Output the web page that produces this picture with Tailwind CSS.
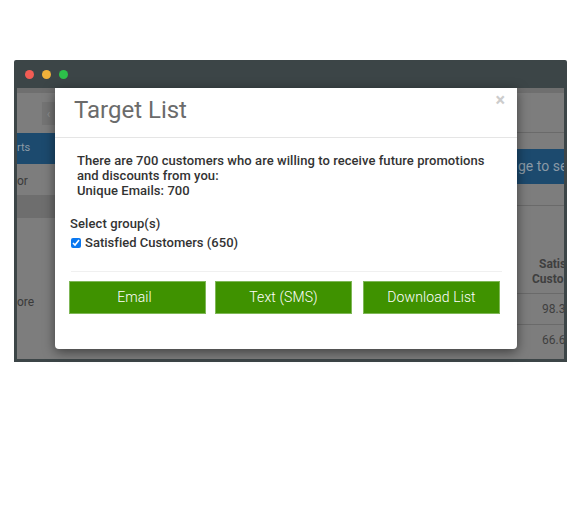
<!DOCTYPE html>
<html>
<head>
<meta charset="utf-8">
<title>Target List</title>
<script src="https://cdn.jsdelivr.net/npm/@tailwindcss/browser@4"></script>
</head>
<body class="bg-white font-['Roboto',sans-serif] w-[580px] h-[530px] overflow-hidden">
<div class="pt-[60px] pl-[14px]">
  <!-- window frame -->
  <div class="relative w-[553px] h-[302px] bg-[#3c4547] flex flex-col rounded-t-[2px]">
    <div class="h-[28px] flex items-center gap-[8px] pl-[11px] shrink-0">
      <span class="w-[9px] h-[9px] rounded-full bg-[#f25c54]"></span>
      <span class="w-[9px] h-[9px] rounded-full bg-[#f0b13a]"></span>
      <span class="w-[9px] h-[9px] rounded-full bg-[#2dc04a]"></span>
    </div>

    <!-- dimmed page behind the dialog -->
    <div class="ml-[3px] mr-[3px] mb-[3px] grow overflow-hidden bg-[#7d7d7d] text-[#3f3f3f] flex justify-between">
      <div class="w-[38px] flex flex-col text-[12px] text-[#3a3a3a]">
        <div class="h-[5px] bg-[#6f6f6f] shrink-0"></div>
        <div class="h-[40px] shrink-0 pt-[9px] flex justify-end">
          <span class="w-[13px] h-[23px] bg-[#747474] text-[#8f8f8f] text-[12px] flex items-center justify-center">‹</span>
        </div>
        <div class="h-[31px] shrink-0 bg-[#1c4a6e] text-[#8b9aa6] text-[11px] flex items-center">rts</div>
        <div class="h-[31px] shrink-0 flex items-center pt-[3px]">or</div>
        <div class="h-[23px] shrink-0 bg-[#6e6e6e]"></div>
        <div class="pt-[77px] leading-[15px]">ore</div>
      </div>
      <div class="w-[60px] flex flex-col">
        <div class="h-[5px] bg-[#6f6f6f] shrink-0"></div>
        <div class="h-[40px] shrink-0 border-b border-[#6a6a6a]"></div>
        <div class="h-[16px] shrink-0"></div>
        <div class="h-[35px] shrink-0 bg-[#1c4a6e] text-[#8b9aa6] text-[14px] flex items-center pl-[14px] whitespace-nowrap overflow-hidden">ge to see</div>
        <div class="h-[22px] shrink-0 border-b border-[#6a6a6a]"></div>
        <div class="h-[87px] shrink-0 pt-[51px] text-[12px] font-bold leading-[15px] whitespace-nowrap overflow-hidden">
          <div class="pl-[35px]">Satis</div>
          <div class="pl-[28px]">Custo</div>
        </div>
        <div class="h-[31px] shrink-0 border-t border-[#6a6a6a] text-[12px] flex items-center pl-[38px] overflow-hidden">98.3</div>
        <div class="h-[31px] shrink-0 border-t border-[#6a6a6a] text-[12px] flex items-center pl-[38px] overflow-hidden">66.6</div>
      </div>
    </div>

    <!-- dialog -->
    <div class="absolute left-[41px] top-[28px] w-[462px] h-[261px] bg-white rounded-b-[4px] shadow-[0_3px_12px_rgba(0,0,0,0.5)] flex flex-col">
      <div class="relative h-[50px] border-b border-[#e5e5e5] pl-[19px] pt-[7px] shrink-0">
        <h4 class="text-[24px] leading-[30px] text-[#6b6b6b]">Target List</h4>
        <span class="absolute right-[12px] top-[3px] text-[#cccccc] text-[18px] leading-[18px] font-bold">×</span>
      </div>
      <div class="px-[14px] grow">
        <p class="pl-[8px] pt-[15px] text-[13px] leading-[15px] font-medium tracking-[0.06px] text-[#333]">There are 700 customers who are willing to receive future promotions<br>and discounts from you:<br>Unique Emails: 700</p>
        <p class="pl-px mt-[18px] text-[13px] leading-[15px] font-medium tracking-[0.1px] text-[#333]">Select group(s)</p>
        <label class="mt-[4px] flex items-center text-[13px] leading-[15px] font-medium tracking-[0.02px] text-[#333]">
          <input type="checkbox" checked class="w-[10px] h-[10px] ml-[2px] mr-[4px] accent-[#0a78f0]">
          Satisfied Customers (650)
        </label>
        <div class="mt-[21px] ml-[2px] mr-[1px] border-t border-[#f0f0f0]"></div>
        <div class="mt-[9px] flex">
          <button class="w-[137px] h-[33px] bg-[#3f9200] border border-[#7fb757] text-white text-[14px] font-light tracking-[0.1px] pr-[6px]">Email</button>
          <button class="w-[137px] h-[33px] bg-[#3f9200] border border-[#7fb757] text-white text-[14px] font-light tracking-[0.1px] ml-[9px]">Text (SMS)</button>
          <button class="w-[137px] h-[33px] bg-[#3f9200] border border-[#7fb757] text-white text-[14px] font-light tracking-[0.1px] ml-[11px]">Download List</button>
        </div>
      </div>
    </div>
  </div>
</div>
</body>
</html>
